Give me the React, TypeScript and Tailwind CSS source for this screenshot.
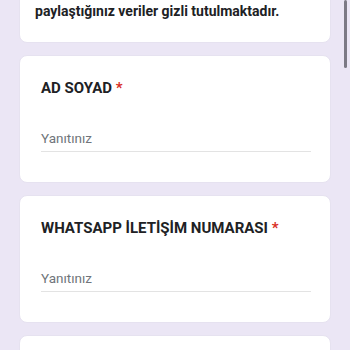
import React from 'react';

const Question = ({ title }: { title: string }) => (
  <div className="mx-[19px] mt-[12px] rounded-lg border border-[#e6e2f0] bg-white pl-[21px] pr-[19px] pt-[21px] pb-[30px]">
    <div className="text-[15px] leading-[22px] font-bold text-[#202124]">
      {title} <span className="text-[#d93025]">*</span>
    </div>
    <div className="mt-[29px] border-b border-[#e3e3e3] pb-[3px] text-[13.5px] leading-[20px] text-[#70757a]">
      Yanıtınız
    </div>
  </div>
);

export default function App() {
  return (
    <div
      className="relative h-[350px] w-[350px] overflow-hidden bg-[#ebe6f5]"
      style={{ fontFamily: 'Roboto, "Noto Sans", sans-serif' }}
    >
      <div className="mx-[19px] mt-[-40px] rounded-lg border border-[#e6e2f0] bg-white pl-[15px] pr-[19px] pt-[40px] pb-[21px]">
        <p className="text-[14px] leading-[20px] font-bold text-[#202124]">
          paylaştığınız veriler gizli tutulmaktadır.
        </p>
      </div>
      <Question title="AD SOYAD" />
      <Question title="WHATSAPP İLETİŞİM NUMARASI" />
      {/* next card, only its top edge is in view */}
      <div className="mx-[19px] mt-[12px] h-[128px] rounded-lg border border-[#e6e2f0] bg-white" />
      <div className="absolute right-[3px] top-0 h-[68px] w-[3px] rounded-full bg-[#7c7a85]" />
    </div>
  );
}
